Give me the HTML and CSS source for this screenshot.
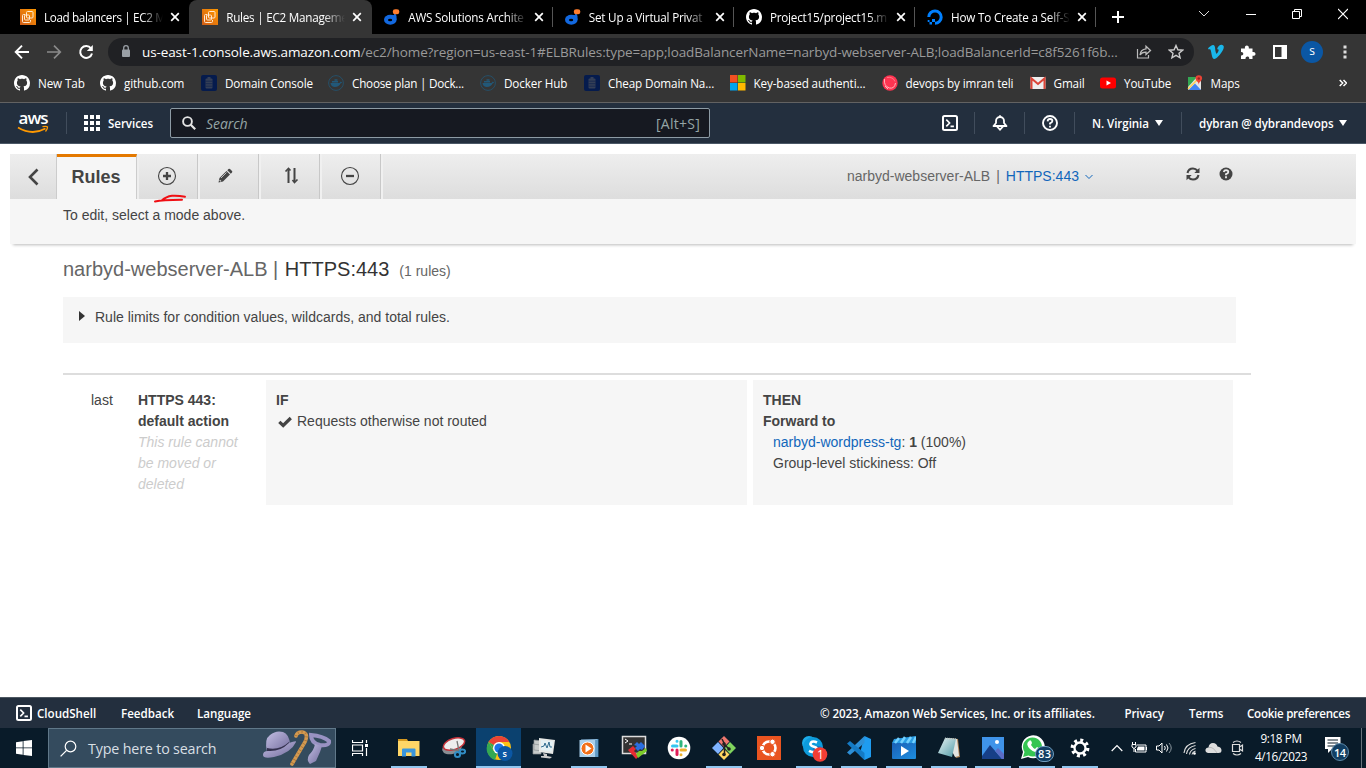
FILE: index.html
```html
<!DOCTYPE html>
<html lang="en">
<head>
<meta charset="utf-8">
<title>Rules | EC2 Management Console</title>
<link rel="stylesheet" href="styles.css">
</head>
<body>
<svg class="defs" width="0" height="0">
  <defs>
    <linearGradient id="ec2g" x1="0" y1="1" x2="1" y2="0"><stop offset="0" stop-color="#d05c17"/><stop offset="1" stop-color="#f90"/></linearGradient>
    <linearGradient id="mov" x1="0" y1="0" x2="1" y2="1"><stop offset="0" stop-color="#1b5fb5"/><stop offset="1" stop-color="#1d8fe0"/></linearGradient>
    <linearGradient id="hat" x1="0" y1="0" x2="1" y2="1"><stop offset="0" stop-color="#c4bfe4"/><stop offset="1" stop-color="#716b9c"/></linearGradient>
    <linearGradient id="note" x1="0" y1="0" x2="1" y2="1"><stop offset="0" stop-color="#e8f4f6"/><stop offset="1" stop-color="#4f99a5"/></linearGradient>
    <symbol id="ec2" viewBox="0 0 16 16"><rect width="16" height="16" fill="url(#ec2g)"/><g fill="none" stroke="#ffe9d0" stroke-width="1"><rect x="6.500" y="2.500" width="6.500" height="6.500" rx="1"/><path d="M5 5.500H3.500q-1 0-1 1v6q0 1 1 1h6q1 0 1-1V11"/><rect x="4.500" y="6" width="5" height="5" rx="1"/></g></symbol>
    <symbol id="x" viewBox="0 0 10 10"><path d="M1.200 1.200l7.600 7.600M8.800 1.200L1.200 8.800" stroke="#fff" stroke-width="1.700"/></symbol>
    <symbol id="dmark" viewBox="0 0 16 16"><ellipse cx="6.300" cy="10.700" rx="6.300" ry="5" fill="#1268df"/><path d="M7 6Q10.500 7 10.800 3.500L12.500 7v4z" fill="#1268df"/><ellipse cx="6.100" cy="11" rx="2.100" ry="1.300" fill="#000"/><rect x="8.800" y=".2" width="6.500" height="5" rx="2.300" fill="#ff7d2d"/></symbol>
    <symbol id="gh" viewBox="0 0 16 16"><path fill="#fff" d="M8 0C3.580 0 0 3.580 0 8c0 3.540 2.290 6.530 5.470 7.590.4.070.55-.17.55-.38 0-.19-.01-.82-.01-1.490-2.010.37-2.530-.49-2.690-.94-.09-.23-.48-.94-.82-1.130-.28-.15-.68-.52-.01-.53.63-.01 1.080.58 1.230.82.72 1.210 1.870.87 2.330.66.070-.52.28-.87.51-1.070-1.780-.2-3.640-.89-3.640-3.950 0-.87.31-1.590.82-2.150-.08-.2-.36-1.020.08-2.120 0 0 .67-.21 2.200.82.64-.18 1.320-.27 2-.27s1.360.09 2 .27c1.530-1.040 2.200-.82 2.200-.82.44 1.100.16 1.920.08 2.120.51.56.82 1.270.82 2.150 0 3.070-1.870 3.750-3.650 3.950.29.25.54.73.54 1.480 0 1.070-.01 1.930-.01 2.200 0 .21.15.46.55.38A8.010 8.010 0 0016 8c0-4.420-3.580-8-8-8z"/></symbol>
    <symbol id="db" viewBox="0 0 16 16"><rect width="16" height="16" rx="2" fill="#051b4d"/><rect x="6.500" y="2" width="3" height="2" fill="#343f56"/><rect x="4.500" y="3.600" width="7" height="10" rx="1" fill="#343f56"/><path d="M4.500 6.200h7M4.500 8.700h7M4.500 11.200h7" stroke="#10234e" stroke-width=".7"/></symbol>
    <symbol id="dock" viewBox="0 0 16 16"><circle cx="8" cy="8" r="7.400" fill="none" stroke="#24526e" stroke-width=".9"/><path d="M2.500 8h9l1.300-1.600 1.400 1.100-1.700 1.100Q11 12 7 12 3 12 2.500 8zM4 6h6v1.600H4zM6.500 4.200h3v1.500h-3z" fill="#225878"/></symbol>
    <symbol id="cs" viewBox="0 0 16 16"><rect x="1" y="1" width="14" height="14" rx="1.500" fill="none" stroke="#fff" stroke-width="2"/><path d="M4.300 4.600 7.600 8l-3.300 3.400M8.500 11.400h3.400" fill="none" stroke="#fff" stroke-width="1.600"/></symbol>
  </defs>
</svg>

<div class="tabstrip">
  <div class="tab"><svg class="i16"><use href="#ec2"/></svg><span>Load balancers | EC2 M</span><svg class="i10"><use href="#x"/></svg></div>
  <div class="tab active"><svg class="i16"><use href="#ec2"/></svg><span>Rules | EC2 Manageme</span><svg class="i10"><use href="#x"/></svg></div>
  <div class="tab sep"><svg class="i16"><use href="#dmark"/></svg><span>AWS Solutions Archite</span><svg class="i10"><use href="#x"/></svg></div>
  <div class="tab sep"><svg class="i16"><use href="#dmark"/></svg><span>Set Up a Virtual Privat</span><svg class="i10"><use href="#x"/></svg></div>
  <div class="tab sep"><svg class="i16"><use href="#gh"/></svg><span>Project15/project15.m</span><svg class="i10"><use href="#x"/></svg></div>
  <div class="tab sep"><svg class="i16" viewBox="0 0 16 16"><path d="M8 14.300A6.200 6.200 0 1 0 1.800 8" fill="none" stroke="#0080ff" stroke-width="3"/><path d="M5 10h3v3H5zM2.500 13H5v2.400H2.500zM.7 11h1.800v2H.7z" fill="#0080ff"/></svg><span>How To Create a Self-S</span><svg class="i10"><use href="#x"/></svg></div>
  <svg class="newtab" viewBox="0 0 12 12"><path d="M6 0v12M0 6h12" stroke="#fff" stroke-width="2"/></svg>
  <div class="winctl">
    <svg width="12" height="12" viewBox="0 0 12 12"><path d="M1 3l5 5 5-5" fill="none" stroke="#ddd"/></svg>
    <svg width="10" height="12" viewBox="0 0 10 12"><path d="M0 6.500h10" stroke="#fff"/></svg>
    <svg width="10" height="12" viewBox="0 0 10 12"><path d="M.5 3.500h7v7h-7zM2.500 3.500v-2h7v7h-2" fill="none" stroke="#fff"/></svg>
    <svg width="10" height="12" viewBox="0 0 10 12"><path d="M0 1l10 10M10 1L0 11" stroke="#fff" stroke-width="1.100"/></svg>
  </div>
</div>

<div class="toolbar">
  <svg class="back" width="16" height="16" viewBox="0 0 16 16"><path d="M15 8H2M8 1.700L1.700 8 8 14.300" fill="none" stroke="#fff" stroke-width="1.900"/></svg>
  <svg class="fwd" width="16" height="16" viewBox="0 0 16 16"><path d="M1 8h13M8 1.700L14.300 8 8 14.300" fill="none" stroke="#8a8a8a" stroke-width="1.700"/></svg>
  <svg class="reload" width="16" height="16" viewBox="0 0 16 16"><path d="M13 4.300A6 6 0 1 0 14 9.500" fill="none" stroke="#fff" stroke-width="2"/><path d="M14.800 1v6H8.800z" fill="#fff"/></svg>
  <div class="omnibox">
    <svg width="10" height="13" viewBox="0 0 10 13"><rect x="1" y="4.500" width="8" height="7.500" rx="1" fill="#9aa0a6"/><path d="M2.700 5V3a2.300 2.300 0 0 1 4.600 0v2" fill="none" stroke="#9aa0a6" stroke-width="1.300"/></svg>
    <div class="url"><b>us-east-1.console.aws.amazon.com</b>/ec2/home?region=us-east-1#ELBRules:type=app;loadBalancerName=narbyd-webserver-ALB;loadBalancerId=c8f5261f6b...</div>
    <svg class="share" width="16" height="16" viewBox="0 0 16 16"><path d="M1.500 5v9h11v-3" fill="none" stroke="#bbb" stroke-width="1.200"/><path d="M10 2.200L14.500 6.500 10 10.600V8.200Q6 8 4 11 4.500 5.300 10 4.800z" fill="none" stroke="#bbb" stroke-width="1.300"/></svg>
    <svg width="16" height="16" viewBox="0 0 16 16"><path d="M8 1.500l1.900 4.300 4.700.4-3.600 3.100 1.100 4.600L8 11.400l-4.100 2.500L5 9.300 1.400 6.200l4.700-.4z" fill="none" stroke="#ccc" stroke-width="1.400"/></svg>
  </div>
  <svg class="vimeo" width="16" height="16" viewBox="0 0 16 16"><path d="M0 4.200C2 2.600 4 .8 5.200 1c2.300.3 1.700 3.400 2.500 7 .5 2 .8 2 1.400 1.300C10.500 7.600 11 6 10.300 5.500c-.5-.4-1.300 0-1.300 0 .7-3.300 2.800-4.900 5.200-4.600 2.100.3 2 2.700.5 5.500C12.900 9.800 8.400 15 6.300 15 3.700 15 3.600 8.500 2.600 5.800 2.200 4.800 1.400 5.200.7 5.500z" fill="#1ab7ea"/></svg>
  <svg class="puzzle" width="16" height="16" viewBox="0 0 16 16"><path d="M1 4.500h4c-1-4 4.500-4 3.800 0h3.700v3.600c4-.8 4 4.400 0 3.700V15H9.200c.5-3.200-4-3.200-3.700 0H1v-3.500c3 .3 3-3.700 0-3.400z" fill="#fff"/></svg>
  <svg class="panel" width="14" height="14" viewBox="0 0 14 14"><path d="M1 1h12v12H1z" fill="none" stroke="#fff" stroke-width="2"/><path d="M8.500 1H13v12H8.500z" fill="#fff"/></svg>
  <div class="avatar">s</div>
  <svg class="dots" width="4" height="14" viewBox="0 0 4 14"><path d="M.5.5h3v3h-3zM.5 5.500h3v3h-3zM.5 10.500h3v3h-3z" fill="#ddd"/></svg>
</div>

<div class="bookmarks">
  <div class="bm w86"><svg class="i16"><use href="#gh"/></svg><span>New Tab</span></div>
  <div class="bm w101"><svg class="i16"><use href="#gh"/></svg><span>github.com</span></div>
  <div class="bm w127"><svg class="i16"><use href="#db"/></svg><span>Domain Console</span></div>
  <div class="bm w152 tight"><svg class="i16"><use href="#dock"/></svg><span>Choose plan | Dock...</span></div>
  <div class="bm w104"><svg class="i16"><use href="#dock"/></svg><span>Docker Hub</span></div>
  <div class="bm w146"><svg class="i16"><use href="#db"/></svg><span>Cheap Domain Na...</span></div>
  <div class="bm w152"><svg class="i16" viewBox="0 0 16 16"><path d="M0 0h7.500v7.500H0z" fill="#f25022"/><path d="M8 0h7.500v7.500H8z" fill="#7fba00"/><path d="M0 8h7.500v7.500H0z" fill="#00a4ef"/><path d="M8 8h7.500v7.500H8z" fill="#ffb900"/></svg><span>Key-based authenti...</span></div>
  <div class="bm w148"><svg class="i16" viewBox="0 0 16 16"><circle cx="8" cy="8" r="7.700" fill="#ff3451"/><path d="M2.500 4q-1 7 5 9 5 1 6-5M3 11l3 3" fill="none" stroke="#ffb4bb" stroke-width="1"/><path d="M5 2.500q6-1 8 4" fill="none" stroke="#ff7d8a" stroke-width=".9"/></svg><span>devops by imran teli</span></div>
  <div class="bm w71"><svg class="i16" viewBox="0 0 16 16"><rect x=".5" y="2" width="15" height="12" rx="1" fill="#eee"/><path d="M1.500 14V3.500L8 9l6.500-5.500V14" fill="none" stroke="#db4437" stroke-width="2"/></svg><span>Gmail</span></div>
  <div class="bm w87"><svg class="i16" viewBox="0 0 16 16"><rect y="2.500" width="16" height="11" rx="2.500" fill="#f00"/><path d="M6.500 5.500v5L11 8z" fill="#fff"/></svg><span>YouTube</span></div>
  <div class="bm"><svg class="i16" viewBox="0 0 16 16"><rect x="1" y="2" width="13" height="13" rx="1" fill="#e5e5e5"/><path d="M1 2h9L1 12z" fill="#34a853"/><path d="M1.500 15L8 8.500l6 6.500z" fill="#4285f4"/><path d="M1 14L12 3" stroke="#ffd04b" stroke-width="1.500"/><path d="M8.500 3.500a3.300 3.300 0 0 1 6.600 0c0 2.500-3.300 3-3.300 6.500 0-3.500-3.300-4-3.300-6.500z" fill="#ea4335"/><circle cx="11.800" cy="3.500" r="1.200" fill="#922"/></svg><span>Maps</span></div>
  <svg class="more" width="8" height="8" viewBox="0 0 8 8"><path d="M.7 1l3 3-3 3M4.500 1l3 3-3 3" fill="none" stroke="#fff" stroke-width="1.500"/></svg>
</div>

<header class="awsnav">
  <svg class="logo" width="34" height="24" viewBox="0 0 34 24"><text x="1.500" y="13" class="awstext" textLength="30">aws</text><path d="M1 16.500Q15 25 28.500 17.500" fill="none" stroke="#f90" stroke-width="1.800"/><path d="M25.500 15.700q4-.9 5 .2.300 2-2 4.600" fill="none" stroke="#f90" stroke-width="1.300"/></svg>
  <i class="vr"></i>
  <svg class="grid" width="16" height="16" viewBox="0 0 16 16"><path d="M0 0h4v4H0zM6 0h4v4H6zM12 0h4v4h-4zM0 6h4v4H0zM6 6h4v4H6zM12 6h4v4h-4zM0 12h4v4H0zM6 12h4v4H6zM12 12h4v4h-4z" fill="#fff"/></svg>
  <b class="services">Services</b>
  <div class="search"><svg width="14" height="14" viewBox="0 0 14 14"><circle cx="5.500" cy="5.500" r="4.400" fill="none" stroke="#e4e4e4" stroke-width="1.900"/><path d="M8.700 8.700l4.500 4.500" stroke="#e4e4e4" stroke-width="2.200"/></svg><i>Search</i><span>[Alt+S]</span></div>
  <div class="navicons">
    <div><svg class="i16"><use href="#cs"/></svg></div>
    <div><svg width="16" height="16" viewBox="0 0 16 16"><path d="M8 .3v2.200M1.500 11L4 8V6a4 4 0 0 1 8 0v2l2.500 3z" fill="none" stroke="#fff" stroke-width="1.800" stroke-linejoin="round"/><path d="M5 11.500L8 14.700l3-3.200" fill="none" stroke="#fff" stroke-width="1.800"/></svg></div>
    <div><svg width="16" height="16" viewBox="0 0 16 16"><circle cx="8" cy="8" r="7" fill="none" stroke="#fff" stroke-width="1.900"/><path d="M5.600 6.300Q5.800 4 8 4q2.400 0 2.400 2Q10.400 7.400 8 8.300v1.200M8 10.700v1.800" fill="none" stroke="#fff" stroke-width="1.800"/></svg></div>
  </div>
  <div class="region"><b>N. Virginia</b><i class="caret"></i></div>
  <div class="user"><b>dybran @ dybrandevops</b><i class="caret"></i></div>
</header>

<main>
  <div class="modes">
    <div class="modebar">
      <div class="m back2"><svg width="12" height="18" viewBox="0 0 12 18"><path d="M10.500 1.500L3 9l7.500 7.500" fill="none" stroke="#444" stroke-width="2.600"/></svg></div>
      <div class="m rules">Rules</div>
      <div class="m cell"><svg width="20" height="20" viewBox="0 0 20 20"><circle cx="10" cy="10" r="8.500" fill="none" stroke="#444" stroke-width="1.100"/><path d="M10 6v8M6 10h8" stroke="#444" stroke-width="2.300"/></svg></div>
      <div class="m cell c2"><svg width="20" height="20" viewBox="0 0 20 20"><path d="M3.500 16.500l1-4.500 7-7 3.500 3.500-7 7z" fill="#444"/><path d="M12.300 4.200l1.200-1.200q.7-.7 1.500 0l2 2q.7.700 0 1.500l-1.200 1.200z" fill="#444"/><path d="M6 12l5.500-5.500" stroke="#ddd" stroke-width=".8"/><path d="M4.700 14.200l1.200 1.200" stroke="#ddd" stroke-width="1.200"/></svg></div>
      <div class="m cell c3"><svg width="20" height="20" viewBox="0 0 20 20"><path d="M7.500 17V3.500M13.500 2v13.500" stroke="#444" stroke-width="2"/><path d="M4.500 5.500L7.500 2.500l2 2M11.500 14l2 2.500 3-3" fill="none" stroke="#444" stroke-width="1.700"/></svg></div>
      <div class="m cell c4"><svg width="20" height="20" viewBox="0 0 20 20"><circle cx="10" cy="10" r="8.500" fill="none" stroke="#444" stroke-width="1.100"/><path d="M6 10h8" stroke="#444" stroke-width="2.300"/></svg></div>
      <div class="listener">narbyd-webserver-ALB<em>|</em><a>HTTPS:443</a><svg width="8" height="8" viewBox="0 0 8 8"><path d="M.5 2L4 5.500 7.500 2" fill="none" stroke="#1166bb"/></svg></div>
      <svg class="refresh" width="14" height="14" viewBox="0 0 14 14"><path d="M1.500 6Q2.500 1.500 7 1.500q2.700 0 4.500 2.200M12.500 8Q11.500 12.500 7 12.500q-2.700 0-4.500-2.200" fill="none" stroke="#444" stroke-width="2.100"/><path d="M13.500.7V6H8.300zM.5 13.300V8h5.200z" fill="#444"/></svg>
      <svg class="helpc" width="14" height="14" viewBox="0 0 14 14"><circle cx="7" cy="7" r="6.500" fill="#444"/><path d="M4.700 5Q5.200 3.200 7 3.200q2.300.1 2.300 1.800Q9.300 6.300 7 7.200v1.100M7 9.300v1.900" fill="none" stroke="#eee" stroke-width="1.800"/></svg>
      <svg class="mark" width="36" height="10" viewBox="0 0 36 10"><path d="M3 7.500Q10 6 30 5.800M10 6.300Q14 2.500 20 1.700q7-.3 13 1" fill="none" stroke="#f00f14" stroke-width="2" stroke-linecap="round"/></svg>
    </div>
    <p class="hint">To edit, select a mode above.</p>
  </div>
  <h1>narbyd-webserver-ALB <em>|</em> <strong>HTTPS:443</strong><small>(1 rules)</small></h1>
  <div class="limits"><i></i>Rule limits for condition values, wildcards, and total rules.</div>
  <section class="rule">
    <div class="pos">last</div>
    <div class="name"><b>HTTPS 443:<br>default action</b><br><i>This rule cannot be moved or deleted</i></div>
    <div class="box ifbox"><b>IF</b><div class="req"><svg width="14" height="12" viewBox="0 0 14 12"><path d="M1.300 5.800L5.200 9.500 12.800 2" fill="none" stroke="#444" stroke-width="3.200"/></svg>Requests otherwise not routed</div></div>
    <div class="box"><b>THEN<br>Forward to</b><div class="tg"><a>narbyd-wordpress-tg</a>: <b>1</b> (100%)<br>Group-level stickiness: Off</div></div>
  </section>
</main>

<footer>
  <svg class="i16"><use href="#cs"/></svg><b class="f1">CloudShell</b><b class="f2">Feedback</b><b class="f3">Language</b>
  <div class="right"><b class="copy">© 2023, Amazon Web Services, Inc. or its affiliates.</b><b class="priv">Privacy</b><b class="terms">Terms</b><b class="cook">Cookie preferences</b></div>
</footer>

<div class="taskbar">
  <svg class="win" width="16" height="16" viewBox="0 0 16 16"><path d="M0 2.200l6.700-1v6.300H0zM7.500 1L16 0v7.500H7.500zM0 8.300h6.700v6.500L0 13.800zM7.500 8.300H16V16l-8.500-1.100z" fill="#fff"/></svg>
  <div class="tsearch">
    <svg width="17" height="17" viewBox="0 0 17 17"><circle cx="10.500" cy="6.500" r="5.300" fill="none" stroke="#fff" stroke-width="1.200"/><path d="M6.600 10.400L.6 16.400" stroke="#fff" stroke-width="1.300"/></svg>
    <span>Type here to search</span>
    <svg class="art" width="70" height="38" viewBox="0 0 70 38">
      <path d="M5 23Q2 10 8 6q6-5 13-3 6 2 7 12-8 9-22 8z" fill="url(#hat)"/>
      <path d="M5 19q12 3 22-6l1 4q-9 9-23 6z" fill="#34314f"/>
      <path d="M1 26q0-4 5-4 12 1 21-8 8-3 7-1-5 11-22 15-11 2-11-2z" fill="url(#hat)"/>
      <path d="M34 7q1-4 6-4 7 1 3 10L30 35" fill="none" stroke="#d49a50" stroke-width="3.600" stroke-linecap="round"/><path d="M34 7q1-4 6-4 7 1 3 10L30 35" fill="none" stroke="#a5713a" stroke-width="3.400" stroke-dasharray=".7 3"/>
      <path d="M49 6q12 1 18 6 1 5-9 4-9-2-9-10z" fill="none" stroke="#9992c2" stroke-width="4"/><path d="M53 15l7 2-2 6-4 9-6 3q-4-4-1-9 5-5 6-11z" fill="url(#hat)"/>
    </svg>
  </div>
  <svg class="tview" width="16" height="16" viewBox="0 0 16 16"><path d="M.5 0v2.500h10V0M.5 16v-2.500h10V16M.5 5h10v6H.5zM14.500 0v3M14.500 8v8" fill="none" stroke="#fff" stroke-width="1.200"/><path d="M13 4h3v3h-3z" fill="#fff"/></svg>
  <div class="apps">
    <div class="app run"><svg width="24" height="24" viewBox="0 0 24 24"><path d="M1 3h9l1 2H1z" fill="#d79a20"/><path d="M1 5h21.500v15H1z" fill="#ffd667"/><path d="M5 20.500v-7q0-1 1-1h11.500q1 0 1 1v7h-4v-4H9v4z" fill="#3a96dd"/></svg></div>
    <div class="app"><svg width="24" height="24" viewBox="0 0 24 24"><ellipse cx="10" cy="12" rx="10" ry="6" transform="rotate(-15 10 12)" fill="#898e94"/><ellipse cx="12" cy="8" rx="11" ry="5.500" transform="rotate(-18 12 8)" fill="#eee" stroke="#c5333b" stroke-width="1.500"/><path d="M15 5l2 10M8 13l10 2" stroke="#777" stroke-width="1.300"/><g fill="none" stroke="#318ec6" stroke-width="2"><circle cx="15.500" cy="18.500" r="2.600"/><ellipse cx="20.500" cy="15.500" rx="2.600" ry="2"/></g></svg></div>
    <div class="app run cur"><svg width="28" height="26" viewBox="0 0 28 26"><circle cx="14" cy="13" r="12" fill="#fbc116"/><path d="M14 13L3.600 7A12 12 0 0 1 24.400 7H14z" fill="#ea4335"/><path d="M14 13l-4 12A12 12 0 0 1 3.600 7l5.200 9z" fill="#34a853"/><path d="M14 13L3.600 7 8.700 15z" fill="#34a853"/><circle cx="14" cy="13" r="6" fill="#fff"/><circle cx="14" cy="13" r="4.600" fill="#1a73e8"/><circle cx="20" cy="18.500" r="7.500" fill="#0b57a4"/><text x="17.500" y="22" class="badge-s">s</text></svg></div>
    <div class="app"><svg width="24" height="24" viewBox="0 0 24 24"><path d="M2 4l9 1v10l-9-1zM1 8l8 1v9H1z" fill="#c6cac9" stroke="#8d9295" stroke-width=".7"/><path d="M7 2l16 2-2 14-14-2z" fill="#e7e9e7"/><path d="M9 4l12 1.500-1.500 10L9 14z" fill="#e4f2f5"/><path d="M9 11l3-1 1-3 2 5 2-6 1 5h2" fill="none" stroke="#326d90"/><path d="M11 17l4 1v2l5 1-2 1.500-9-1v-1.500h3z" fill="#ccc"/></svg></div>
    <div class="app run"><svg width="24" height="24" viewBox="0 0 24 24"><path d="M4 3.500L21 3v18l-17-.5z" fill="#8dbce0"/><path d="M2.500 4h16v17h-16z" fill="#a9cfea"/><path d="M19 4v17M21 3v18" stroke="#347aab"/><circle cx="10.500" cy="12.500" r="6.500" fill="#f27019" stroke="#fff"/><path d="M8.500 8.500l6 4-6 4z" fill="#fff"/></svg></div>
    <div class="app"><svg width="26" height="26" viewBox="0 0 26 26"><path d="M1.500 1.500h23v17h-23z" fill="#333" stroke="#ddd" stroke-width="1.500"/><path d="M4 4l3 2-3 2M8 9h3" fill="none" stroke="#fff"/><path d="M7 15l5-4 3 3-2 2 5 5-3 3z" fill="#e52b33"/><path d="M13 10l3-3 2 2 2-2 4 4-3 4-2-1-2 2-3-3 2-2z" fill="#2b6ee0"/><path d="M15 19l3-3 3 0 4-3 1 3-9 7z" fill="#7ccb29"/></svg></div>
    <div class="app"><svg width="24" height="24" viewBox="0 0 24 24"><circle cx="12" cy="12" r="11.300" fill="#fff"/><g fill="none" stroke-width="3" stroke-linecap="round"><path d="M5.500 10h4.500M10 5.200v.1" stroke="#36c5f0"/><path d="M14 5.500v4.500M18.800 10h-.1" stroke="#2eb67d"/><path d="M14 14h4.500M14 18.800v-.1" stroke="#ecb22e"/><path d="M10 14v4.500M5.200 14h.1" stroke="#e01e5a"/></g></svg></div>
    <div class="app run"><svg width="24" height="24" viewBox="0 0 24 24"><path d="M12 0l5.500 5.500L12 11 6.500 5.500z" fill="#ef776e"/><path d="M6 6l5.500 6L6 18l-6-6z" fill="#80b3ff"/><path d="M18 6l6 6-6 6-5.500-6z" fill="#80d45e"/><path d="M12 13l5.500 5.500L12 24l-5.500-5.500z" fill="#ffd761"/><path d="M10 3l2.500 5v11M12 8l5 5" fill="none" stroke="#222" stroke-width="1.500"/><g fill="#222"><circle cx="12" cy="8" r="1.800"/><circle cx="17" cy="13" r="1.800"/><circle cx="12" cy="18.500" r="1.800"/></g></svg></div>
    <div class="app"><svg width="24" height="24" viewBox="0 0 24 24"><path d="M0 0h24v24H0z" fill="#e95420"/><circle cx="12" cy="12" r="6.500" fill="none" stroke="#fff" stroke-width="2.600"/><g fill="#fff" stroke="#e95420" stroke-width="1"><circle cx="5" cy="12" r="2.700"/><circle cx="15.500" cy="5.800" r="2.700"/><circle cx="15.500" cy="18.200" r="2.700"/></g></svg></div>
    <div class="app run"><svg width="28" height="28" viewBox="0 0 28 28"><circle cx="9" cy="9" r="7" fill="#1cadea"/><circle cx="13" cy="13" r="10" fill="#0d9bdb"/><circle cx="18" cy="18" r="6" fill="#0d79cb"/><path d="M17 8.500q-4-2-6 0-2 2.800 3 4.300 5 1.500 2 4.500-3 1.800-7-.5" fill="none" stroke="#fff" stroke-width="2.600"/><circle cx="20" cy="20.500" r="7.300" fill="#f33e35"/><text x="17" y="25" class="badge-n">1</text></svg></div>
    <div class="app run"><svg width="24" height="24" viewBox="0 0 24 24"><path d="M17.500 0L24 3v18l-6.500 3-5-5z" fill="#1f9cf0"/><path d="M17.500 0v7L3 19l-3-2.500z" fill="#2d8fd6"/><path d="M3 5L17.500 17v7L0 7.500z" fill="#147ac4"/></svg></div>
    <div class="app run"><svg width="24" height="24" viewBox="0 0 24 24"><path d="M0 7h24v15q0 1-1 1H1q-1 0-1-1z" fill="url(#mov)"/><path d="M0 7l2-4 22-3v7z" fill="#2a9de4"/><path d="M3 7l4-5M9 7l4-6M15 7l4-6M21 7l3-6" stroke="#73d1ff" stroke-width="2.500"/><path d="M9 10v10l8-5z" fill="#fff"/></svg></div>
    <div class="app run"><svg width="24" height="24" viewBox="0 0 24 24"><path d="M8 2l13 1 2 18-4 1z" fill="#ae8153"/><path d="M8 2l12 1 2 17-4 1z" fill="#e2e5e2"/><path d="M8 2l11 1-4 18-14-4z" fill="url(#note)"/><path d="M8 2.500l12 1" stroke="#b9c6c5" stroke-width="2" stroke-dasharray="1 1"/></svg></div>
    <div class="app run late"><svg width="24" height="24" viewBox="0 0 24 24"><path d="M1 1h22v22H1z" fill="#3f94e9"/><path d="M1 20L9 9l12 14H1z" fill="#173f87"/><path d="M14 15l3-3 6 6v5h-2z" fill="#5a6cc5"/><circle cx="16" cy="6" r="2" fill="#fff"/></svg></div>
    <div class="app run late"><svg width="34" height="28" viewBox="0 0 34 28"><path d="M1 25l2-7A11.500 11.500 0 1 1 8 23z" fill="#fff"/><path d="M3 23l1.500-5A9.500 9.500 0 1 1 8.500 21.500z" fill="#35c552"/><path d="M9 7q2-2 3 2l-1 2q2 3 4 4l2-2q4 2 2 4-4 3-9-2T9 7z" fill="#fff"/><rect x="15.500" y="12.500" width="18" height="15" rx="7.500" fill="#123f63" stroke="#709cbd"/><text x="18" y="24" class="badge-w" textLength="13">83</text></svg></div>
    <div class="app run late"><svg width="20" height="20" viewBox="0 0 20 20"><circle cx="10" cy="10" r="5.500" fill="none" stroke="#fff" stroke-width="2.300"/><circle cx="10" cy="10" r="7.700" fill="none" stroke="#fff" stroke-width="3.400" stroke-dasharray="2.900 3.147"/></svg></div>
  </div>
  <div class="tray">
    <svg width="12" height="12" viewBox="0 0 12 12"><path d="M.7 9L6 3.500 11.300 9" fill="none" stroke="#fff" stroke-width="1.200"/></svg>
    <svg width="17" height="14" viewBox="0 0 17 14"><path d="M6 4h9v7H4.500V8M15.500 6v3" fill="none" stroke="#fff"/><path d="M7 5.500h6.500v4H6V8z" fill="#fff"/><path d="M1.500 1v2M4.500 1v2M1 3.500h4V6L3 7.500 1 6zM3 7v4" fill="none" stroke="#fff"/></svg>
    <svg width="17" height="14" viewBox="0 0 17 14"><path d="M.5 5H3l3-3v10L3 9H.5z" fill="none" stroke="#fff"/><path d="M8.500 5q1.500 2 0 4M10.500 3.500q3 3.500 0 7" fill="none" stroke="#fff"/><path d="M13 2q4.500 5 0 10" fill="none" stroke="#8a969e"/></svg>
    <svg class="wifi" width="14" height="14" viewBox="0 0 14 14"><path d="M1 12Q2 3 12.500 1.500M3.500 13Q4.500 6 12.500 4.500M6.500 13.500Q7 9 12.500 7.500M9 13.500q.5-2.500 3.500-3.500" fill="none" stroke="#ddd" stroke-width="1.100"/><circle cx="11.500" cy="12.500" r="1.300" fill="#fff"/></svg>
    <svg width="17" height="12" viewBox="0 0 17 12"><path d="M3 11Q0 10 .5 7.500 1 5.500 3.500 5.500 4 1 8 1q3.500 0 4.500 3.500 4 .500 4 4 0 2.500-3 2.500z" fill="#ddd"/><path d="M4 5.500q4-1 8 5.500" stroke="#bbb" fill="none"/></svg>
    <svg class="meet" width="14" height="18" viewBox="0 0 14 18"><path d="M1.500 5.500h7v7h-7zM8.500 8l3-2v6l-3-2M2 3.500Q6 .5 10 3.500M2 14.500q4 3 8 0" fill="none" stroke="#ddd" stroke-width="1.200"/></svg>
  </div>
  <div class="clock">9:18 PM<br>4/16/2023</div>
  <svg class="notif" width="28" height="26" viewBox="0 0 28 26"><path d="M1 2h15.500v12H8l-4 4v-4H1z" fill="#fff"/><path d="M3.500 5h10.500M3.500 8h10.500M3.500 11h8" stroke="#0b1c28"/><circle cx="16" cy="17" r="8.500" fill="#123f63" stroke="#5b87a7"/><text x="10" y="21.500" class="badge-w" textLength="12">14</text></svg>
  <i class="edge"></i>
</div>
</body>
</html>
```
FILE: styles.css
```css
* { box-sizing: border-box; }
body { margin: 0; width: 1366px; height: 768px; overflow: hidden; display: flex; flex-direction: column; background: #fff; font-family: "Open Sans", "Noto Sans", sans-serif; font-size: 12px; color: #444; }
svg { flex: none; display: block; }
.defs { position: absolute; }
.i16 { width: 16px; height: 16px; }
.i10 { width: 10px; height: 10px; }

/* browser chrome */
.tabstrip { height: 34px; flex: none; background: #000; display: flex; align-items: center; padding-left: 8px; color: #fff; }
.tab { width: 181.200px; height: 34px; flex: none; display: flex; align-items: center; padding-left: 12px; font-size: 11.700px; letter-spacing: -0.350px; }
.tab span { width: 119px; margin: 0 7px 0 8px; overflow: hidden; white-space: nowrap; -webkit-mask-image: linear-gradient(90deg, #000 82%, transparent); mask-image: linear-gradient(90deg, #000 82%, transparent); }
.tab.active { background: #353535; border-radius: 8px 8px 0 0; width: 183px; padding-left: 13px; letter-spacing: -0.250px; }
.tab.sep { background: linear-gradient(#555, #555) right center / 1px 20px no-repeat; letter-spacing: -0.200px; }
.active + .tab.sep { width: 180.500px; }
.newtab { width: 12px; height: 12px; margin-left: 16px; }
.winctl { margin-left: auto; display: flex; align-items: center; gap: 36px; padding: 0 18px 6px 0; }
.toolbar { height: 35px; flex: none; background: #353535; display: flex; align-items: center; }
.back { margin-left: 14px; }
.fwd { margin-left: 16px; }
.reload { margin-left: 16px; }
.omnibox { width: 1086px; height: 28px; margin-left: 14px; border-radius: 14px; background: #202124; display: flex; align-items: center; padding-left: 13px; color: #9a9a9a; }
.url { width: 996px; margin-left: 11px; font-size: 13.500px; letter-spacing: -0.105px; white-space: nowrap; }
.url b { color: #fff; font-weight: 400; }
.omnibox .share { margin: 0 16px 0 -2px; }
.vimeo { margin-left: 14px; }
.puzzle { margin-left: 16px; }
.panel { margin-left: 17px; }
.avatar { width: 22px; height: 22px; border-radius: 50%; background: #0b57a4; color: #fff; text-align: center; line-height: 20px; font-size: 12px; margin-left: 14px; }
.dots { margin-left: 20px; }
.bookmarks { height: 34px; flex: none; background: #353535; border-bottom: 1px solid #626262; display: flex; align-items: center; padding: 0 19px 5px 14px; color: #fff; }
.bm { display: flex; align-items: center; gap: 8px; white-space: nowrap; font-size: 11.700px; flex: none; letter-spacing: -0.120px; }
.tight { letter-spacing: -0.220px; }
.w71 { width: 70.500px; } .w86 { width: 86px; } .w87 { width: 86.500px; } .w101 { width: 101px; } .w104 { width: 104px; } .w127 { width: 127px; } .w146 { width: 145.500px; } .w148 { width: 148px; } .w152 { width: 152px; }
.more { margin-left: auto; }

/* console navigation */
.awsnav { height: 41px; flex: none; background: #232f3e; border-bottom: 1px solid #4b5866; display: flex; align-items: center; color: #fff; white-space: nowrap; font-size: 11.600px; letter-spacing: -0.070px; }
.awsnav b, footer b { font-weight: 600; }
.logo { margin-left: 17px; }
.awstext { font: 600 17px "Open Sans", sans-serif; fill: #fff; }
.vr { width: 1px; height: 22px; background: #414d5c; margin: 0 17px 0 15px; }
.services { width: 62px; margin-left: 8px; }
.search { width: 540px; height: 30px; border: 1px solid #8d9ba5; border-radius: 2px; background: #161921; color: #95a5a6; display: flex; align-items: center; padding: 0 9px 0 11px; font-size: 14px; }
.search i { margin-left: 10px; }
.search span { margin-left: auto; font-size: 14px; letter-spacing: 0.250px; }
.navicons { display: flex; margin-left: 215px; }
.navicons div { width: 50px; height: 22px; display: flex; align-items: center; justify-content: center; border-right: 1px solid #414d5c; }
.region, .user { height: 22px; display: flex; align-items: center; }
.region { width: 107px; padding-left: 17px; border-right: 1px solid #414d5c; }
.user { padding-left: 17px; }
.caret { border: 4.500px solid transparent; border-top: 6px solid #fff; border-bottom: 0; margin-left: 6px; }

/* rules page */
main { flex: 1; min-height: 0; padding: 10px 10px 0; font: 14px/21px "Liberation Sans", Arial, sans-serif; }
main a { color: #1166bb; }
em { font-style: normal; }
.modes { height: 90px; margin-bottom: 1px; background: #f6f6f6; box-shadow: 0 4px 3px -3px #bbb; }
.modebar { position: relative; height: 45px; display: flex; background: linear-gradient(#eee, #ddd); }
.m { display: flex; align-items: center; justify-content: center; }
.back2 { width: 47px; border-right: 1px solid #ccc; }
.rules { width: 80px; border-top: 3px solid #e47900; border-right: 1px solid #ccc; background: #f6f6f6; font-size: 18px; font-weight: 700; box-shadow: 2px 0 #eee; padding-right: 1px; padding-bottom: 2px; }
.cell { width: 58px; margin-left: 3px; border-right: 1px solid #c8c8c8; box-shadow: 2px 0 #f0f0f0; padding: 0 2px 2px 0; }
.rules + .cell { width: 59px; margin-left: 2px; }
.c2 { padding-right: 9px; }
.c3 { padding-right: 0; }
.c4 { padding-right: 4px; }
.listener { display: flex; align-items: center; white-space: nowrap; margin-left: 466px; color: #666; }
.listener em { margin: 0 6px; }
.listener svg { margin-left: 6px; }
.refresh { margin: 13px 0 0 93px; }
.helpc { margin: 13px 0 0 19px; }
.mark { position: absolute; left: 142px; top: 40px; }
.hint { margin: 0; padding: 6px 53px; }
h1 { margin: 0; padding: 12px 53px 0; height: 52px; font-size: 20px; line-height: 24px; font-weight: 400; color: #666; white-space: nowrap; }
h1 strong { font-weight: 400; color: #333; margin-left: 1px; }
h1 small { font-size: 14px; margin-left: 10px; }
.limits { width: 1173px; height: 46px; margin-left: 53px; background: #f6f6f6; display: flex; padding: 10px 16px; }
.limits i { width: 6px; height: 0; border: 5px solid transparent; border-left: 6px solid #333; border-right: 0; margin: 4px 10px 0 0; }
.rule { width: 1188px; margin: 30px 0 0 53px; border-top: 2px solid #ddd; padding-top: 5px; display: flex; }
.pos { width: 75px; padding: 10px 0 0 28px; }
.name { width: 128px; padding: 10px 20px 0 0; }
.name i { color: #ccc; }
.box { width: 480px; height: 125px; background: #f6f6f6; padding: 10px; }
.ifbox { width: 481px; margin-right: 6px; }
.req { display: flex; align-items: center; gap: 5px; padding-left: 2px; white-space: nowrap; }
.tg { padding-left: 10px; }

/* console footer */
footer { height: 31px; flex: none; background: #232f3e; border-top: 1px solid #4d5761; color: #fff; display: flex; align-items: center; padding-left: 16px; font-size: 11.600px; white-space: nowrap; }
.f1 { width: 84px; margin-left: 5px; } .f2 { width: 76px; }
.right { display: flex; margin-left: auto; width: 546px; }
.copy { width: 304.500px; letter-spacing: -0.090px; } .priv { width: 64.500px; letter-spacing: -0.130px; } .terms { width: 58px; letter-spacing: -0.150px; } .cook { letter-spacing: -0.270px; }

/* Windows taskbar */
.taskbar { height: 40px; flex: none; background: #091b29; display: flex; align-items: center; color: #fff; }
.win { margin-left: 16px; }
.tsearch { width: 288px; height: 40px; margin-left: 16px; border: 1px solid #607889; background: #344b5e; display: flex; align-items: center; padding-left: 11px; font-size: 14.300px; letter-spacing: -0.170px; color: #d8dfe4; white-space: nowrap; }
.tsearch span { width: 174px; margin-left: 11px; }
.tview { margin-left: 16px; }
.apps { height: 40px; margin-left: 18px; display: flex; }
.app { width: 45px; height: 40px; display: flex; align-items: center; justify-content: center; }
.late { width: 43.700px; }
.run { background: linear-gradient(#91c6ef, #91c6ef) center bottom / 36px 2px no-repeat; }
.cur { background: linear-gradient(#91c6ef, #91c6ef) center bottom / 45px 2px no-repeat #0b416f; }
.tray { display: flex; align-items: center; gap: 8px; margin-left: 9px; width: 136px; }
.wifi { margin-left: 2px; }
.meet { margin-left: 1px; }
.clock { width: 60px; text-align: center; font-size: 11.700px; line-height: 18px; letter-spacing: -0.350px; margin: -2px 0 0 4px; }
.notif { margin: 0 auto 0 13px; }
.edge { width: 1px; height: 40px; background: #67727b; margin-right: 4px; }
.badge-s { font: 600 9px "Open Sans", sans-serif; fill: #fff; }
.badge-n { font: 12px "Open Sans", sans-serif; fill: #fff; }
.badge-w { font: 600 11px "Open Sans", sans-serif; fill: #fff; }
```
